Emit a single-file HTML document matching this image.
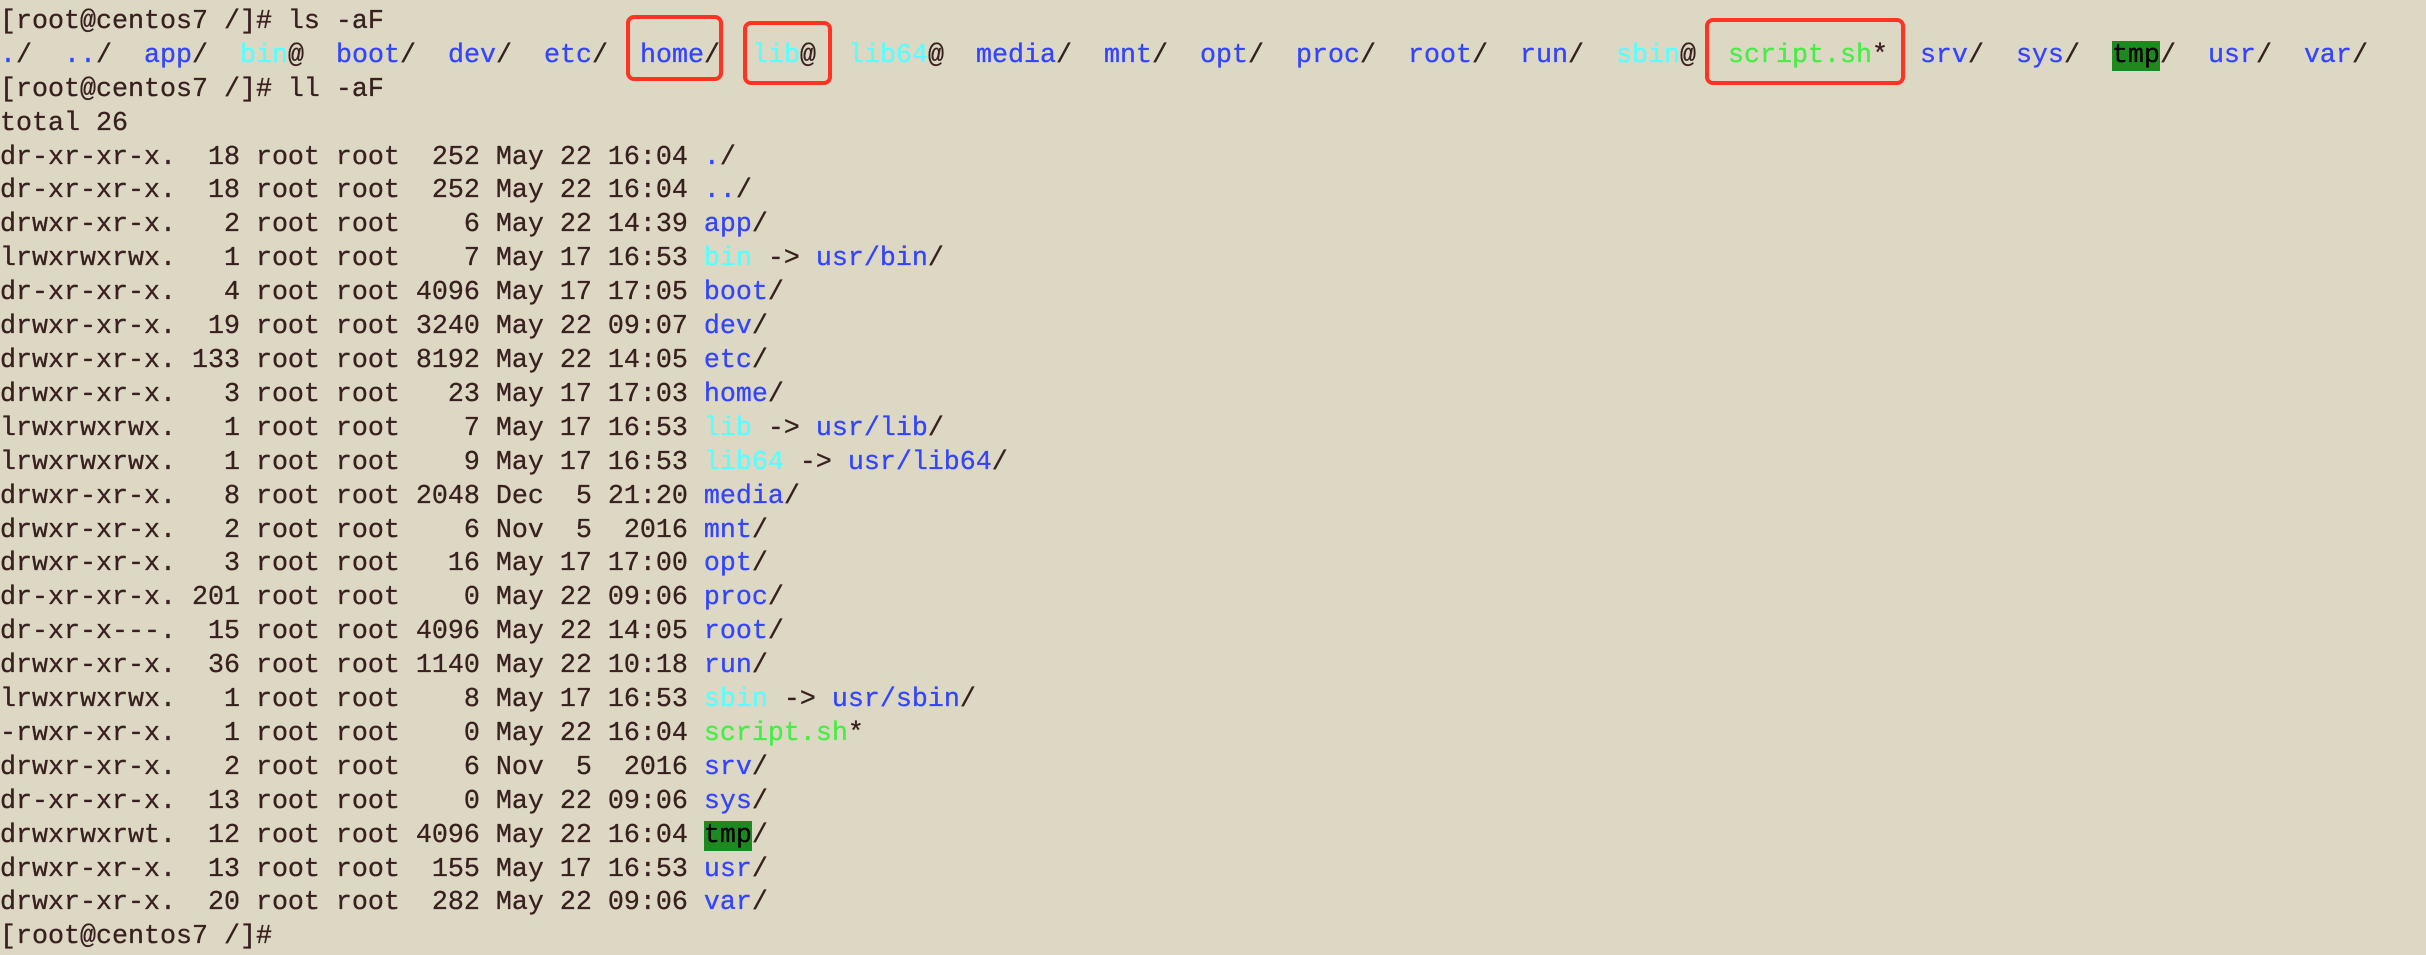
<!DOCTYPE html>
<html><head><meta charset="utf-8"><style>
html,body{margin:0;padding:0;background:#ddd8c4;width:2426px;height:930px;overflow:hidden}
pre{position:absolute;left:0;top:-28px;margin:0;font-family:"Liberation Mono",monospace;font-size:26.67px;line-height:33.9px;color:#38201f;white-space:pre;-webkit-text-stroke:0.3px currentColor}
.b{color:#3344ff}.c{color:#55ffff}.g{color:#44ee44}.t{background:#1d8a20;color:#000}
.box{position:absolute;border:4px solid #ff3322;border-radius:8px;box-sizing:border-box}
</style></head><body>
<pre>[root@centos7 /]#
[root@centos7 /]# ls -aF
<span class="b">.</span>/  <span class="b">..</span>/  <span class="b">app</span>/  <span class="c">bin</span>@  <span class="b">boot</span>/  <span class="b">dev</span>/  <span class="b">etc</span>/  <span class="b">home</span>/  <span class="c">lib</span>@  <span class="c">lib64</span>@  <span class="b">media</span>/  <span class="b">mnt</span>/  <span class="b">opt</span>/  <span class="b">proc</span>/  <span class="b">root</span>/  <span class="b">run</span>/  <span class="c">sbin</span>@  <span class="g">script.sh</span>*  <span class="b">srv</span>/  <span class="b">sys</span>/  <span class="t">tmp</span>/  <span class="b">usr</span>/  <span class="b">var</span>/
[root@centos7 /]# ll -aF
total 26
dr-xr-xr-x.  18 root root  252 May 22 16:04 <span class="b">.</span>/
dr-xr-xr-x.  18 root root  252 May 22 16:04 <span class="b">..</span>/
drwxr-xr-x.   2 root root    6 May 22 14:39 <span class="b">app</span>/
lrwxrwxrwx.   1 root root    7 May 17 16:53 <span class="c">bin</span> -&gt; <span class="b">usr/bin</span>/
dr-xr-xr-x.   4 root root 4096 May 17 17:05 <span class="b">boot</span>/
drwxr-xr-x.  19 root root 3240 May 22 09:07 <span class="b">dev</span>/
drwxr-xr-x. 133 root root 8192 May 22 14:05 <span class="b">etc</span>/
drwxr-xr-x.   3 root root   23 May 17 17:03 <span class="b">home</span>/
lrwxrwxrwx.   1 root root    7 May 17 16:53 <span class="c">lib</span> -&gt; <span class="b">usr/lib</span>/
lrwxrwxrwx.   1 root root    9 May 17 16:53 <span class="c">lib64</span> -&gt; <span class="b">usr/lib64</span>/
drwxr-xr-x.   8 root root 2048 Dec  5 21:20 <span class="b">media</span>/
drwxr-xr-x.   2 root root    6 Nov  5  2016 <span class="b">mnt</span>/
drwxr-xr-x.   3 root root   16 May 17 17:00 <span class="b">opt</span>/
dr-xr-xr-x. 201 root root    0 May 22 09:06 <span class="b">proc</span>/
dr-xr-x---.  15 root root 4096 May 22 14:05 <span class="b">root</span>/
drwxr-xr-x.  36 root root 1140 May 22 10:18 <span class="b">run</span>/
lrwxrwxrwx.   1 root root    8 May 17 16:53 <span class="c">sbin</span> -&gt; <span class="b">usr/sbin</span>/
-rwxr-xr-x.   1 root root    0 May 22 16:04 <span class="g">script.sh</span>*
drwxr-xr-x.   2 root root    6 Nov  5  2016 <span class="b">srv</span>/
dr-xr-xr-x.  13 root root    0 May 22 09:06 <span class="b">sys</span>/
drwxrwxrwt.  12 root root 4096 May 22 16:04 <span class="t">tmp</span>/
drwxr-xr-x.  13 root root  155 May 17 16:53 <span class="b">usr</span>/
drwxr-xr-x.  20 root root  282 May 22 09:06 <span class="b">var</span>/
[root@centos7 /]#</pre>
<div class="box" style="left:626px;top:15px;width:97px;height:66px"></div>
<div class="box" style="left:743px;top:21px;width:89px;height:64px"></div>
<div class="box" style="left:1705px;top:18px;width:200px;height:67px"></div>
</body></html>
